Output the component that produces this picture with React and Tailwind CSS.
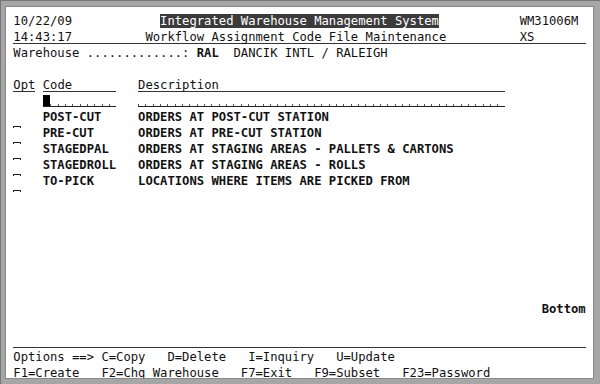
import React from "react";

const rows = [
  { code: "POST-CUT", desc: "ORDERS AT POST-CUT STATION" },
  { code: "PRE-CUT", desc: "ORDERS AT PRE-CUT STATION" },
  { code: "STAGEDPAL", desc: "ORDERS AT STAGING AREAS - PALLETS & CARTONS" },
  { code: "STAGEDROLL", desc: "ORDERS AT STAGING AREAS - ROLLS" },
  { code: "TO-PICK", desc: "LOCATIONS WHERE ITEMS ARE PICKED FROM" },
];

function pad(s, n) {
  return s + " ".repeat(Math.max(0, n - s.length));
}

function Line({ children }) {
  return <div className="h-[16px] leading-[16px] whitespace-pre">{children}</div>;
}

function U({ children }) {
  return (
    <span className="inline-block h-[15px] border-b border-[#333] align-top leading-[16px]">{children}</span>
  );
}

function Field({ width, cursor }) {
  return (
    <span
      className="relative inline-block h-[14px] align-top border-b border-[#222] bg-[repeating-linear-gradient(90deg,#555_0_1px,transparent_1px_1ch)] bg-[length:100%_2px] bg-bottom bg-no-repeat"
      style={{ width: `${width}ch` }}
    >
      {cursor && <span className="absolute left-0 top-[2px] h-[11px] w-[1ch] bg-black" />}
    </span>
  );
}

function OptMark() {
  return (
    <span className="inline-block w-[1ch] h-[2px] align-top translate-y-[17px] border-t border-x border-[#222]" />
  );
}

export default function App() {
  return (
    <div className="h-[384px] w-[600px] overflow-hidden border-l border-t border-[#777] bg-[#a6a6a6] pl-[4px] pt-[5px] pr-[5px] pb-[5px]">
      <div className="h-[373px] w-[589px] overflow-hidden border border-[#8a8a8a] bg-white pt-[6px] text-[12.2px] text-[#111] font-['DejaVu_Sans_Mono',monospace]">
        <Line>
          {" 10/22/09            "}
          <span className="bg-[#3b3b3b] text-white">Integrated Warehouse Management System</span>
          {"           WM31006M"}
        </Line>
        <Line>
          {" "}
          <U>{"14:43:17          Workflow Assignment Code File Maintenance          XS       "}</U>
        </Line>
        <Line>
          {" Warehouse .............: "}
          <span className="font-bold">RAL</span>
          {"  DANCIK INTL / RALEIGH"}
        </Line>
        <Line>{" "}</Line>
        <Line>
          {" "}
          <U>Opt</U>
          {" "}
          <U>{pad("Code", 10)}</U>
          {"   "}
          <U>{pad("Description", 50)}</U>
        </Line>
        <Line>
          {"     "}
          <Field width={10} cursor />
          {"   "}
          <Field width={50} />
        </Line>
        {rows.map((r) => (
          <Line key={r.code}>
            {" "}
            <OptMark />
            {"   "}
            <span className="font-bold">{pad(r.code, 13)}{r.desc}</span>
          </Line>
        ))}
        {Array.from({ length: 7 }).map((_, i) => (
          <Line key={i}>{" "}</Line>
        ))}
        <Line>
          {" ".repeat(73)}
          <span className="font-bold">Bottom</span>
        </Line>
        <Line>{" "}</Line>
        <Line>
          {" "}
          <U>{" ".repeat(78)}</U>
        </Line>
        <Line>{" Options ==> C=Copy   D=Delete   I=Inquiry   U=Update"}</Line>
        <Line>{" F1=Create   F2=Chg Warehouse   F7=Exit   F9=Subset   F23=Password"}</Line>
      </div>
    </div>
  );
}
